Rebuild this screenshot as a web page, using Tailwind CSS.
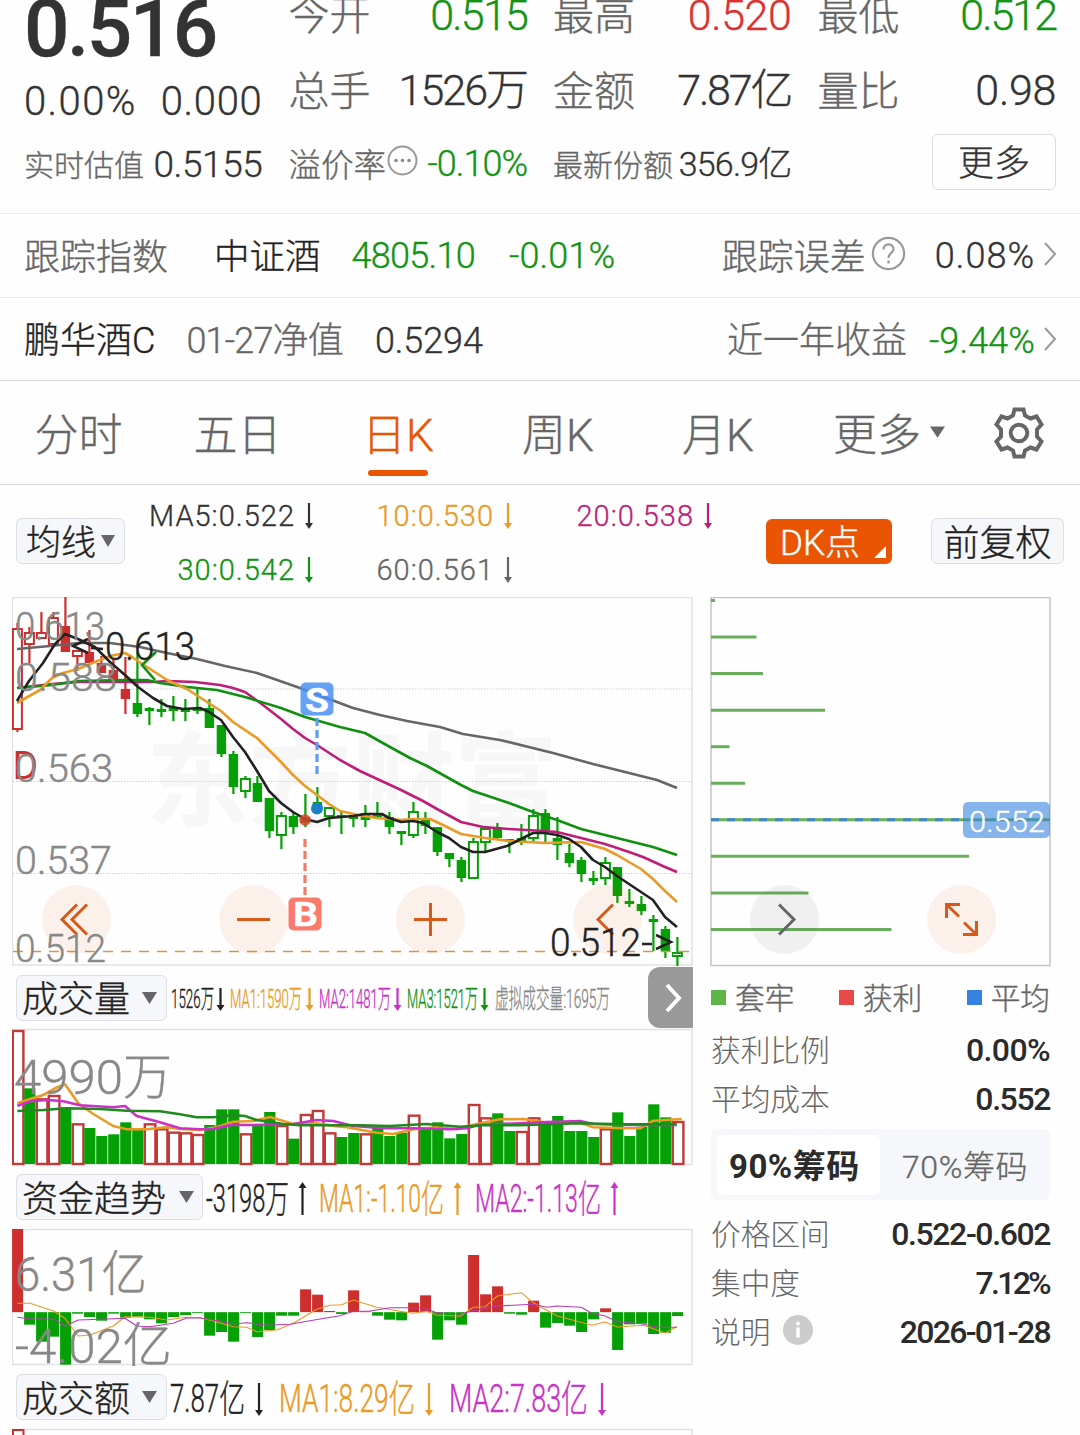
<!DOCTYPE html>
<html lang="zh-CN">
<head>
  <meta charset="UTF-8" />
  <meta name="viewport" content="width=device-width, initial-scale=1.0"/>
  <title>酒ETF 0.516</title>
  <script src="https://cdn.jsdelivr.net/npm/@tailwindcss/browser@4"></script>
</head>
<body class="bg-white">
<main class="w-[1080px] h-[1435px] overflow-hidden bg-[#fefefe] text-[#333] leading-none whitespace-nowrap font-light [-webkit-text-stroke:0.35px] font-[Roboto,'Noto_Sans_CJK_SC',sans-serif]">

  <!-- Quote header -->
  <section class="-mt-[23px] h-[237px] px-6 pb-[13px] grid grid-cols-4 gap-x-[26px] border-b border-[#ececec]">
    <div>
      <div class="h-[104px] flex items-center text-[80px] font-medium tracking-[-2.5px]">0.516</div>
      <div class="h-[42px] flex items-center justify-between text-[40px]"><span class="tracking-[1.4px]">0.00%</span><span class="tracking-[0.7px]">0.000</span></div>
      <div class="mt-[5px] h-[72px] flex items-center justify-between"><span class="pt-1 text-[30px] text-[#666]">实时估值</span><span class="text-[37px] tracking-[-0.4px]">0.5155</span></div>
    </div>
    <div>
      <div class="h-[76px] flex items-center justify-between"><span class="pt-[3px] text-[41px] text-[#666]">今开</span><span class="text-[43px] tracking-[-1.8px] text-[#129412]">0.515</span></div>
      <div class="h-[75px] flex items-center justify-between"><span class="pt-[3px] text-[41px] text-[#666]">总手</span><span class="text-[43px] tracking-[-2px]">1526万</span></div>
      <div class="h-[72px] flex items-center">
        <span class="pt-1 text-[32.5px] text-[#666]">溢价率</span>
        <svg class="mr-auto ml-px -mt-[7px] size-[31px]" viewBox="0 0 31 31"><circle cx="15.5" cy="15.5" r="14" fill="none" stroke="#999" stroke-width="2"/><g fill="#888"><circle cx="9" cy="15.5" r="1.8"/><circle cx="15.5" cy="15.5" r="1.8"/><circle cx="22" cy="15.5" r="1.8"/></g></svg>
        <span class="text-[36px] tracking-[-1px] text-[#129412]">-0.10%</span>
      </div>
    </div>
    <div>
      <div class="h-[76px] flex items-center justify-between"><span class="pt-[3px] text-[41px] text-[#666]">最高</span><span class="text-[43px] tracking-[-0.4px] text-[#dc3030]">0.520</span></div>
      <div class="h-[75px] flex items-center justify-between"><span class="pt-[3px] text-[41px] text-[#666]">金额</span><span class="text-[43px] tracking-[-2.1px]">7.87亿</span></div>
      <div class="h-[72px] flex items-center justify-between"><span class="pt-1 text-[30px] text-[#666]">最新份额</span><span class="text-[34px] tracking-[-0.8px]">356.9亿</span></div>
    </div>
    <div>
      <div class="h-[76px] flex items-center justify-between"><span class="pt-[3px] text-[41px] text-[#666]">最低</span><span class="text-[43px] tracking-[-2px] text-[#129412]">0.512</span></div>
      <div class="h-[75px] flex items-center justify-between"><span class="pt-[3px] text-[41px] text-[#666]">量比</span><span class="text-[43px] tracking-[-0.3px]">0.98</span></div>
      <div class="h-[68px] flex items-center justify-end"><button class="w-[124px] h-[56px] rounded-md border border-[#dcdcdc] pt-[3px] text-[36px]">更多</button></div>
    </div>
  </section>

  <!-- Tracking index -->
  <section class="h-[84px] pl-6 pr-[23px] flex items-center border-b border-[#ececec] text-[36px]">
    <span class="pt-1 text-[#666]">跟踪指数</span>
    <span class="ml-[46px] pt-1 text-[35.5px] text-[#222]">中证酒</span>
    <span class="ml-[31px] tracking-[-0.7px] text-[#129412]">4805.10</span>
    <span class="ml-[34px] tracking-[0.1px] text-[#129412]">-0.01%</span>
    <span class="ml-auto pt-1 text-[#666]">跟踪误差</span>
    <svg class="ml-[5px] mr-[29px] -mt-1 size-[35px]" viewBox="0 0 35 35" fill="none" stroke="#999" stroke-width="2.2"><circle cx="17.5" cy="17.5" r="15.6"/><path d="M12.500 13.500c0-7 10-6.500 10-.5 0 4-5 4-5 9M17.500 24.500v3"/></svg>
    <span class="tracking-[1px]">0.08%</span>
    <svg class="-mt-[3px] ml-2 w-[14px] h-6" viewBox="0 0 14 24" fill="none" stroke="#999" stroke-width="2"><path d="M2 1l10 11L2 23"/></svg>
  </section>
  <section class="h-[83px] pl-6 pr-[23px] flex items-center border-b border-[#d8d8d8] text-[36px]">
    <span class="pt-[3px] text-[#222]">鹏华酒C</span>
    <span class="ml-[31px] pt-[3px] tracking-[-0.8px] text-[#666]">01-27净值</span>
    <span class="ml-8 pt-[3px] tracking-[-0.1px]">0.5294</span>
    <span class="ml-auto pt-1 text-[#666]">近一年收益</span>
    <span class="ml-[22px] pt-[3px] tracking-[0.1px] text-[#129412]">-9.44%</span>
    <svg class="ml-2 w-[14px] h-6" viewBox="0 0 14 24" fill="none" stroke="#999" stroke-width="2"><path d="M2 1l10 11L2 23"/></svg>
  </section>

  <!-- Period tabs -->
  <nav class="h-[104px] flex border-b border-[#d8d8d8] text-[44px] text-[#666]">
    <a class="w-[157px] pt-[33px] text-center">分时</a>
    <a class="w-[161px] pt-[33px] text-center">五日</a>
    <a class="w-[160px] pt-[33px] flex flex-col items-center text-[#ea5504]"><span>日K</span><i class="mt-[12px] h-[6px] w-[60px] rounded-full bg-[#ea5504]"></i></a>
    <a class="w-[160px] pt-[33px] text-center">周K</a>
    <a class="w-[160px] pt-[33px] text-center">月K</a>
    <a class="w-[146px] ml-[35px] pt-[33px] flex gap-[9px]"><span>更多</span><svg class="mt-[12px] w-[15px] h-3" viewBox="0 0 16 12"><path d="M0 0h16l-8 12z" fill="#666"/></svg></a>
    <svg class="ml-[14px] mt-[26px] size-[52px]" viewBox="-26 -26 52 52" fill="none" stroke="#666" stroke-width="4"><circle r="8.300"/><path d="M-4.500 -23.500H4.500L6 -17.500 L11.500 -14.500 L17.500 -16.500 L22.500 -8.500 L18 -3.500V3.500L22.500 8.500 L17.500 16.500 L11.500 14.500 L6 17.500 L4.500 23.500H-4.500L-6 17.500 L-11.500 14.500 L-17.500 16.500 L-22.500 8.500 L-18 3.500V-3.500L-22.500 -8.500 L-17.500 -16.500 L-11.500 -14.500 L-6 -17.500Z"/></svg>
  </nav>

  <!-- Moving averages -->
  <section class="h-[112px] pl-4 flex items-center">
    <button class="w-[109px] h-[46px] rounded-md border border-[#dcdfe4] bg-[#f6f7fa] flex items-center justify-center gap-[5px] text-[35px] text-[#222]"><span class="pt-[5px]">均线</span><svg class="w-[14px] h-3" viewBox="0 0 14 12"><path d="M0 0h14l-7 12z" fill="#666"/></svg></button>
    <div id="averages" class="w-[589px] h-[108px] grid grid-cols-[190px_199px_200px] text-[29px] tracking-[1px]"></div>
    <button class="relative ml-[52px] w-[126px] h-[45px] rounded-md bg-[#ea5504] pl-[14px] pt-1 text-left text-[35px] text-white">DK点<svg class="absolute right-[6px] bottom-[6px] size-3" viewBox="0 0 12 12"><path d="M12 0v12H0z" fill="#fff"/></svg></button>
    <button class="ml-[39px] w-[133px] h-[46px] rounded-md border border-[#dcdfe4] bg-[#f6f7fa] pt-[5px] text-[36px] text-[#222]">前复权</button>
  </section>

  <div class="flex">
    <!-- Charts -->
    <div class="ml-3 w-[681px]">
      <svg id="kline" class="block w-[681px] h-[370px]" viewBox="12 597 681 370"></svg>
      <div class="h-[61px] flex items-center">
        <button class="ml-1 w-[151px] h-[46px] rounded-md border border-[#dcdfe4] bg-[#f6f7fa] flex items-center pl-[5px] text-[36px] text-[#222]"><span class="pt-[5px]">成交量</span><svg class="ml-3 w-[15px] h-3" viewBox="0 0 15 12"><path d="M0 0h15l-7.500 12z" fill="#666"/></svg></button>
        <svg id="volInfo" class="w-[481px] h-[61px]" viewBox="167 967 481 61"></svg>
        <span class="w-[45px] h-[61px] rounded-l-xl bg-[#999] flex items-center justify-center"><svg class="ml-1 w-[18px] h-[30px]" viewBox="0 0 18 30" fill="none" stroke="#fff" stroke-width="4"><path d="M3 2l12 13L3 28"/></svg></span>
      </div>
      <svg id="volume" class="block w-[681px] h-[138px]" viewBox="12 1028 681 138"></svg>
      <div class="h-[62px] flex items-center">
        <button class="ml-1 w-[187px] h-[46px] rounded-md border border-[#dcdfe4] bg-[#f6f7fa] flex items-center pl-[5px] text-[36px] text-[#222]"><span class="pt-[5px]">资金趋势</span><svg class="ml-[13px] w-[15px] h-3" viewBox="0 0 15 12"><path d="M0 0h15l-7.500 12z" fill="#666"/></svg></button>
        <svg id="fundInfo" class="w-[490px] h-[62px]" viewBox="203 1166 490 62"></svg>
      </div>
      <svg id="fund" class="block w-[681px] h-[138px]" viewBox="12 1228 681 138"></svg>
      <div class="h-[62px] flex items-center">
        <button class="ml-1 w-[151px] h-[46px] rounded-md border border-[#dcdfe4] bg-[#f6f7fa] flex items-center pl-[5px] text-[36px] text-[#222]"><span class="pt-[5px]">成交额</span><svg class="ml-3 w-[15px] h-3" viewBox="0 0 15 12"><path d="M0 0h15l-7.500 12z" fill="#666"/></svg></button>
        <svg id="turnInfo" class="w-[526px] h-[62px]" viewBox="167 1366 526 62"></svg>
      </div>
      <svg class="block w-[681px] h-[7px]" viewBox="12 1428 681 7" fill="none"><path d="M12.500 1435v-5.500H692v6" stroke="#e2e2e2" stroke-width="1.500"/><path d="M13 1436v-6h10.500v6" stroke="#cd2f2f" stroke-width="2"/></svg>
    </div>

    <!-- Chip distribution -->
    <aside class="ml-[17px] w-[342px] text-[29.700px] text-[#666]">
      <svg id="chips" class="block w-[342px] h-[370px]" viewBox="710 597 342 370"></svg>
      <div class="ml-px w-[339px] h-[61px] flex items-center justify-between">
        <span class="flex items-center gap-[9px]"><i class="size-[15px] bg-[#5cb545]"></i><span class="pt-[3px]">套牢</span></span>
        <span class="flex items-center gap-[9px]"><i class="size-[15px] bg-[#e84a4a]"></i><span class="pt-[3px]">获利</span></span>
        <span class="flex items-center gap-[9px]"><i class="size-[15px] bg-[#3582e0]"></i><span class="pt-[3px]">平均</span></span>
      </div>
      <div class="ml-px w-[339px] -mt-[3px] [-webkit-text-stroke:0]">
        <div class="h-[49px] flex items-center justify-between"><span class="pt-[3px]">获利比例</span><b class="text-[32px] font-medium tracking-[-0.6px] text-[#2b2b2b]">0.00%</b></div>
        <div class="h-[49px] flex items-center justify-between"><span class="pt-[3px]">平均成本</span><b class="text-[32px] font-medium tracking-[-1.4px] text-[#2b2b2b]">0.552</b></div>
        <div class="mt-[6px] h-[71px] p-[6px] rounded-md bg-[#f6f7fa] flex items-center text-[32px]">
          <span class="w-[163px] h-[60px] rounded-md bg-white flex items-center pl-3 pt-1 text-[33px] font-bold tracking-[0.5px] text-[#2b2b2b]">90%筹码</span>
          <span class="pl-[22px] pt-1 tracking-[0.6px] [-webkit-text-stroke:0.35px]">70%筹码</span>
        </div>
        <div class="mt-[9px] h-[49px] flex items-center justify-between"><span class="pt-[3px]">价格区间</span><b class="text-[32px] font-medium tracking-[-1.400px] text-[#2b2b2b]">0.522-0.602</b></div>
        <div class="h-[49px] flex items-center justify-between"><span class="pt-[3px]">集中度</span><b class="mr-px text-[32px] font-medium tracking-[-2.700px] text-[#2b2b2b]">7.12%</b></div>
        <div class="h-[49px] flex items-center"><span class="pt-[3px]">说明</span><svg class="ml-[13px] -mt-1 size-[30px]" viewBox="0 0 30 30"><circle cx="15" cy="15" r="15" fill="#ccc"/><path d="M15 12.500v10" stroke="#fff" stroke-width="3.400"/><circle cx="15" cy="8.500" r="2" fill="#fff"/></svg><b class="ml-auto text-[32px] font-medium tracking-[-1.700px] text-[#2b2b2b]">2026-01-28</b></div>
      </div>
    </aside>
  </div>
</main>

<script>
  const GREEN = "#05a005", RED = "#cd2f2f", ORANGE = "#ea9a25", PURPLE = "#c832c8", PINK = "#be1e78", GRAY = "#666";
  const x = (i) => 17.4 + 12 * i;
  const put = (id, html) => { document.getElementById(id).innerHTML = html; };
  const line = (pts, color, w) => `<polyline points="${pts}" fill="none" stroke="${color}" stroke-width="${w}" stroke-linejoin="round"/>`;
  const text = (s, x0, x1, y, size, color, extra = "") =>
    `<text x="${x0}" y="${y}" font-size="${size}" fill="${color}" stroke="${color}" stroke-width="0.400" textLength="${x1 - x0}" lengthAdjust="spacingAndGlyphs" ${extra}>${s}</text>`;
  const arrow = (cx, y0, y1, color) => {
    const d = y1 > y0 ? -1 : 1;
    return `<path d="M${cx} ${y0}V${y1 + d * 5}" stroke="${color}" stroke-width="2.200"/><path d="M${cx - 4} ${y1 + d * 6}h8L${cx} ${y1}z" fill="${color}"/>`;
  };
  const frame = (y, h) => `<rect x="12.500" y="${y}" width="679.500" height="${h}" fill="none" stroke="#e2e2e2" stroke-width="1.500"/>`;

  // moving average legend
  put("averages", [
    ["MA5:0.522", "#333"], ["10:0.530", ORANGE], ["20:0.538", PINK], ["30:0.542", "#129412"], ["60:0.561", GRAY],
  ].map(([s, c]) => `<div class="pt-1 flex items-center justify-end gap-2" style="color:${c}">${s}<svg class="w-3 h-7" viewBox="0 0 12 28">${arrow(6, 1, 27, c)}</svg></div>`).join(""));

  // [high, low, body top, body bottom, kind] - upper case kinds are hollow
  const candles = [
    [623,732,629,729,"R"],[627,663,633,644,"R"],[612,638,633,638,"R"],[612,644,618,644,"R"],[597,652,626,652,"r"],
    [650,671,651,656,"R"],[630,663,652,663,"r"],[656,673,663,673,"r"],[660,680,670,680,"r"],[657,714,689,699,"r"],
    [652,717,703,714,"g"],[707,725,708,711,"g"],[699,717,709,712,"g"],[696,721,708,711,"g"],[699,721,708,712,"g"],
    [688,714,708,711,"g"],[699,728,708,728,"g"],[725,757,725,754,"g"],[751,794,754,787,"g"],[776,798,779,791,"G"],
    [776,802,783,802,"g"],[798,838,798,831,"g"],[812,849,816,835,"G"],[812,834,816,827,"g"],[794,827,817,823,"g"],
    [787,812,802,812,"g"],[808,827,808,816,"G"],[812,834,815,818,"g"],[815,827,816,819,"g"],[805,827,813,820,"g"],
    [802,817,814,817,"g"],[812,834,817,827,"g"],[831,845,831,834,"g"],[802,838,812,835,"G"],[812,834,818,826,"g"],
    [827,856,827,852,"g"],[853,867,853,859,"g"],[857,882,860,878,"g"],[838,878,842,878,"G"],[828,852,829,842,"G"],
    [823,840,827,838,"g"],[839,853,839,842,"g"],[824,845,838,841,"g"],[809,842,816,838,"G"],[809,842,813,830,"g"],
    [817,860,838,845,"g"],[844,867,853,863,"g"],[857,882,860,874,"g"],[871,885,878,881,"g"],[857,885,863,878,"G"],
    [867,903,867,896,"g"],[889,907,901,904,"g"],[896,915,904,911,"g"],[915,951,919,922,"g"],[926,958,929,951,"g"],
    [937,966,953,956,"G"],
  ];
  const candle = ([hi, lo, top, bot, k], i) => {
    const c = k.toLowerCase() === "r" ? RED : GREEN, cx = x(i);
    const body = k === k.toUpperCase()
      ? `<rect x="${cx - 4.5}" y="${top}" width="9" height="${bot - top}" fill="#fff" stroke="${c}" stroke-width="2"/>`
      : `<rect x="${cx - 4.7}" y="${top}" width="9.400" height="${bot - top}" fill="${c}"/>`;
    return `<path d="M${cx} ${hi}V${lo}" stroke="${c}" stroke-width="2.200"/>${body}`;
  };
  const button = (cx, icon, fill = "#ea5504", o = 0.08, stroke = "#d95a18") =>
    `<circle cx="${cx}" cy="919.500" r="34.500" fill="${fill}" fill-opacity="${o}"/><path d="${icon}" fill="none" stroke="${stroke}" stroke-width="3"/>`;

  put("kline", `
    ${frame(597.5, 367.5)}
    ${text("东方财富", 146, 558, 819, 103, "#f7f7f7", 'font-weight="700"')}
    ${[689, 781.5, 873.5].map((y) => `<path d="M13 ${y}H692" stroke="#d0d0d0" stroke-width="1" stroke-dasharray="1.500 1.500"/>`).join("")}
    ${candles.map(candle).join("")}
    ${line("17,649 50,646 78,643 110,643 140,647 167,653 197,659 225,666 257,673 300,688 337,702 353,708 380,715 407,721 440,727 463,734 500,740 553,753 593,764 657,780 677,788", GRAY, 2.6)}
    ${line("17,688 52,684 78,682 125,682 153,682 167,681 195,682 220,685 233,688 245,692 263,705 281,719 293,729 305,738 317,745 340,760 360,771 401,790 423,801 437,809 461,822 483,827 509,829 545,831 557,832 581,838 605,844 629,852 643,857 665,867 677,872", PINK, 2.6)}
    ${line("17,688 52,685 78,681 125,680 147,680 160,683 187,687 217,690 245,697 281,708 305,717 340,727 365,733 390,747 410,758 427,766 461,785 473,791 509,803 533,812 557,820 581,829 605,835 629,841 653,847 677,855", "#109010", 2.6)}
    ${line("17,703 40,690 52,678 63,673 78,669 95,662 110,656 125,653 132,657 147,667 167,680 187,689 207,702 221,711 233,722 257,738 280,761 293,775 305,786 317,795 329,804 340,811 358,815 377,818 401,820 413,819 430,819 443,825 461,834 485,838 509,841 545,843 581,842 605,849 617,855 629,862 641,869 653,879 665,891 677,902", ORANGE, 2.6)}
    ${line("17,701 29,681 43,663 55,644 65,634 78,639 95,647 110,662 125,675 138,687 153,698 167,706 183,709 200,708 209,712 221,720 233,737 245,752 257,771 269,791 281,803 293,812 305,819 317,822 329,818 353,816 365,814 382,814 389,818 401,822 413,821 423,823 437,832 449,838 461,847 473,852 485,852 507,846 521,839 533,833 545,833 557,835 569,839 581,847 593,860 605,867 617,876 629,884 641,892 653,900 665,917 677,927", "#222", 2.6)}
    <text x="12.500" y="779" font-size="39" font-weight="400" fill="${RED}">D</text>
    <path d="M156 652L142 665L155 680" fill="none" stroke="#109010" stroke-width="2.600"/>
    <path d="M13 951.500H692" stroke="#d9924f" stroke-width="1.300" stroke-dasharray="10 8"/>
    <path d="M317 718V775" stroke="#5a9cf0" stroke-width="3.200" stroke-dasharray="8 4"/>
    <circle cx="317" cy="808.500" r="6" fill="#1a80c8"/>
    <rect x="300.500" y="682.500" width="33" height="33" rx="5" fill="#4a92f5" fill-opacity="0.850"/>
    ${text("S", 305, 329, 711.5, 34, "#fff", 'font-weight="700"')}
    <path d="M305 839V897" stroke="#ee7a6a" stroke-width="3.200" stroke-dasharray="8 4"/>
    <circle cx="305" cy="820" r="5.800" fill="#d8452a" fill-opacity="0.850"/>
    ${button(76.5, "M77 904.500L62 919.500L77 934.500M87 904.500L72 919.500L87 934.500")}
    ${button(253.5, "M237 919.500H270")}
    ${button(430.5, "M414 919.500H447M430.500 903V936")}
    <rect x="288.500" y="897.500" width="33" height="33" rx="5" fill="#fa7a6c"/>
    ${text("B", 293, 318, 926, 34, "#fff", 'font-weight="700"')}
    ${button(607.5, "M613 904.500L598 919.500L613 934.500")}
    ${text("0.613", 15, 105, 640, 38, "#888")}
    ${text("0.588", 15, 117, 691, 38, "#888")}
    ${text("0.563", 15, 113, 782, 38, "#888")}
    ${text("0.537", 15, 112, 874, 38, "#888")}
    ${text("0.512", 15, 106, 962, 38, "#888")}
    <path d="M88 639L73 646L88 653M91 648L103 649" fill="none" stroke="#222" stroke-width="2.500"/>
    ${text("0.613", 105, 195, 660, 38, "#222")}
    ${text("0.512", 550, 641, 956, 38, "#222")}
    <path d="M642 944H652M656 935L671 942L656 949" fill="none" stroke="#222" stroke-width="2.500"/>
  `);

  // panels below are drawn on a 3x grid, y measured from 1020
  const bx = (v) => v / 3, by = (v) => 1020 + v / 3;
  const curve = (s, color, w) => line(s.split(" ").map((p) => { const [a, b] = p.split(","); return bx(+a).toFixed(1) + "," + by(+b).toFixed(1); }).join(" "), color, w);

  const volumes = "30R 205g 235R 225R 262g 310R 324g 348g 343g 307g 325g 310R 325R 335R 337R 342R 315g 268g 268g 340R 316g 276g 315R 356g 282R 270R 337R 351g 339g 340R 322g 348g 338g 284R 325g 307g 355g 342g 252R 292R 280g 333g 333R 292R 315g 288g 333g 333g 351g 325R 277g 348g 320g 253g 292g 303R".split(" ");
  put("volume", `
    ${frame(1029.5, 135)}
    ${volumes.map((s, i) => {
      const y = by(parseInt(s)), cx = x(i) + 0.4;
      return s.endsWith("R")
        ? `<rect x="${cx - 5}" y="${y + 1}" width="10.600" height="${1163 - y}" fill="#fff" stroke="#c03a3a" stroke-width="2.400"/>`
        : `<rect x="${cx - 5.6}" y="${y}" width="11.200" height="${1164 - y}" fill="${GREEN}"/>`;
    }).join("")}
    ${curve("52,250 88,238 130,225 165,205 195,193 235,250 280,282 340,318 380,328 440,328 500,322 540,327 600,330 650,322 700,305 760,303 810,291 850,303 880,312 950,310 1000,318 1040,322 1130,338 1180,342 1240,328 1310,322 1370,328 1430,312 1500,298 1570,297 1640,308 1740,308 1780,322 1870,325 1920,325 1960,302 2045,297", ORANGE, 2.6)}
    ${curve("52,257 95,243 145,240 190,244 240,256 340,262 375,258 410,288 480,307 540,325 600,328 640,327 690,315 760,315 880,312 950,300 1000,303 1060,318 1150,325 1240,325 1350,328 1400,325 1440,314 1560,310 1640,306 1740,303 1780,312 1870,315 2030,315", PURPLE, 2.6)}
    ${curve("52,273 130,270 200,265 300,267 380,272 480,274 540,283 590,292 640,292 700,285 735,288 770,300 850,312 900,316 1080,316 1170,318 1280,312 1380,320 1450,316 1560,316 1740,310 1870,313 2030,313", "#208a20", 2.6)}
    ${text("4990万", 14, 172, 1094, 49, "#888")}
  `);

  const funds = [627,914,965,950,1034,881,891,902,881,893,890,898,910,891,885,879,947,936,965,879,951,930,887,887,808,824,873,882,811,874,887,899,901,848,826,959,901,914,705,823,799,881,884,842,923,909,917,936,898,865,990,913,911,942,938,888];
  put("fund", `
    ${frame(1229.5, 135)}
    ${funds.map((v, i) => {
      const y = by(v), zero = by(876.5);
      return `<rect x="${x(i) - 5.3}" y="${Math.min(y, zero)}" width="11" height="${Math.abs(y - zero)}" fill="${v < 877 ? RED : GREEN}"/>`;
    }).join("")}
    ${curve("52,850 90,850 160,873 195,895 235,948 270,945 340,918 375,890 450,892 500,900 560,892 600,893 640,903 700,920 740,922 770,935 830,930 880,910 950,868 990,856 1025,854 1060,840 1130,862 1200,874 1240,880 1280,874 1310,885 1380,889 1420,862 1456,860 1492,828 1564,818 1600,848 1670,887 1775,916 1816,906 1852,921 1930,916 1996,939 2030,920", ORANGE, 1.1)}
    ${curve("52,892 90,897 160,897 195,918 235,900 320,897 375,895 410,918 450,920 520,910 560,894 600,894 660,903 700,912 740,908 800,916 870,913 960,897 1020,887 1060,874 1110,873 1170,863 1270,863 1310,878 1380,882 1420,872 1490,858 1600,853 1640,862 1670,858 1744,862 1775,880 1816,888 1852,905 1930,912 1970,922 2030,922", "#b43cb4", 1.1)}
    ${text("6.31亿", 15, 147, 1291, 49, "#888")}
    ${text("-4.02亿", 15, 172, 1363, 49, "#888")}
  `);

  put("volInfo", [
    text("1526万", 171, 214, 1008, 26, "#222"), arrow(220.5, 988, 1011, "#222"),
    text("MA1:1590万", 230, 302, 1008, 26, ORANGE), arrow(309.5, 988, 1011, ORANGE),
    text("MA2:1481万", 319, 391, 1008, 26, PURPLE), arrow(397.5, 988, 1011, PURPLE),
    text("MA3:1521万", 407, 478, 1008, 26, "#129412"), arrow(484.5, 988, 1011, "#129412"),
    text("虚拟成交量:1695万", 495, 610, 1008, 26, "#888"),
  ].join(""));
  put("fundInfo", [
    text("-3198万", 206, 289, 1212, 38, "#222"), arrow(302.5, 1215, 1182, "#222"),
    text("MA1:-1.10亿", 319, 444, 1212, 38, ORANGE), arrow(457.5, 1215, 1182, ORANGE),
    text("MA2:-1.13亿", 475, 601, 1212, 38, PURPLE), arrow(614.5, 1215, 1182, PURPLE),
  ].join(""));
  put("turnInfo", [
    text("7.87亿", 170, 245, 1412, 38, "#222"), arrow(259, 1383, 1416, "#222"),
    text("MA1:8.29亿", 279, 415, 1412, 38, ORANGE), arrow(429, 1383, 1416, ORANGE),
    text("MA2:7.83亿", 449, 588, 1412, 38, PURPLE), arrow(602, 1383, 1416, PURPLE),
  ].join(""));

  put("chips", `
    <rect x="711" y="597.500" width="339" height="368" fill="none" stroke="#c4c4c4" stroke-width="1.500"/>
    ${[715, 756.5, 763, 825, 729.5, 745, 1050, 969, 808.5, 891.5].map((x1, i) => `<path d="M711 ${600.5 + 36.55 * i}H${x1}" stroke="#69ae5b" stroke-width="3"/>`).join("")}
    <path d="M711 819.800H963" stroke="#3f85c8" stroke-width="3" stroke-dasharray="8 8"/>
    <rect x="963" y="802" width="87" height="36" rx="5" fill="#3582e0" fill-opacity="0.600"/>
    ${text("0.552", 969, 1045, 832, 30, "#fff")}
    ${button(784.5, "M779 904.500L794 919.500L779 934.500", "#666", 0.09, "#666")}
    ${button(961.5, "M946.500 918V904.500H960M947 905L959 916.500M976.500 921V934.500H963M976 934L964 922.500")}
  `);
</script>
</body>
</html>
